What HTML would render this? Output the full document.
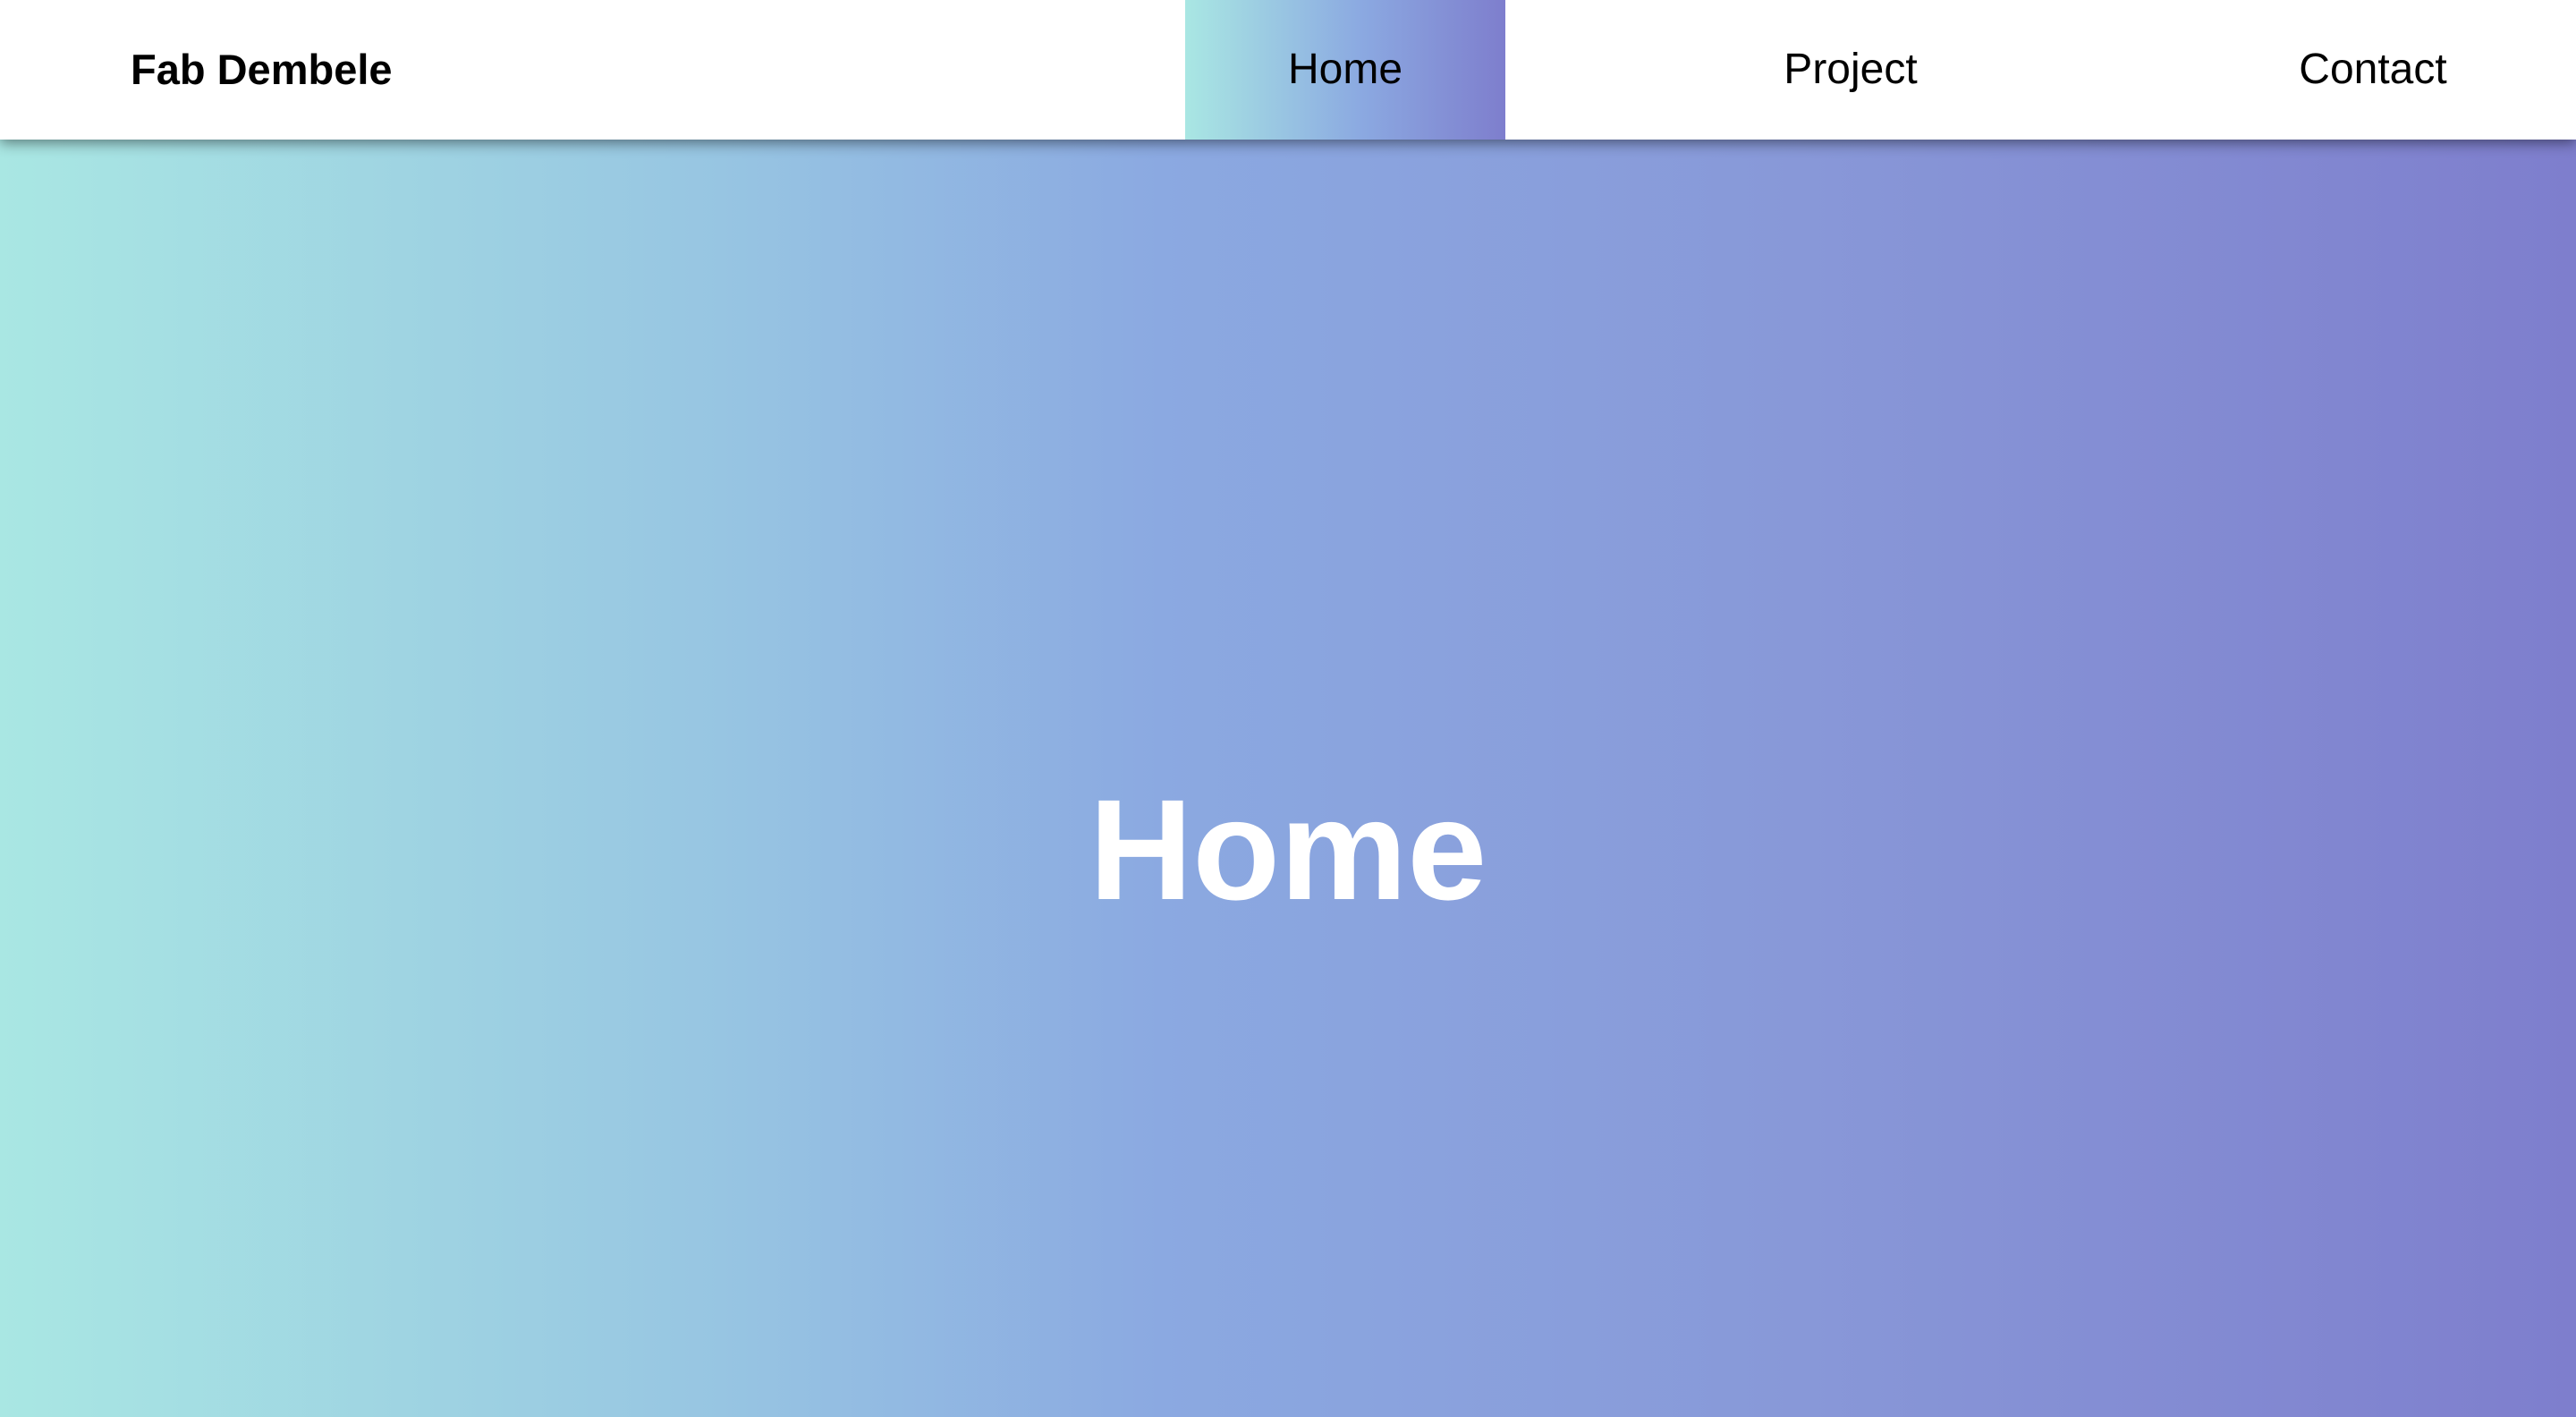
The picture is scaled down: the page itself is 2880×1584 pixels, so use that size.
<!DOCTYPE html>
<html><head><style>
html,body{margin:0;padding:0}
body{width:2880px;height:1584px;overflow:hidden;position:relative;font-family:"Liberation Sans",Arial,sans-serif;background:linear-gradient(to right,#a9e7e3 0%,#97c5e2 28%,#8ba9e1 45%,#8898d8 70%,#7e7ecd 100%)}
nav{position:absolute;left:0;top:0;width:2880px;height:156px;background:#fff;box-shadow:0 4px 14px rgba(0,0,0,.45)}
.logo{position:absolute;left:146px;top:0;line-height:156px;font-size:47px;font-weight:bold;color:#000}
.tab{position:absolute;top:0;height:156px;line-height:156px;font-size:48px;color:#000;text-align:center}
.active{left:1325px;width:358px;background:linear-gradient(to right,#a9e7e3,#8ba9e1 55%,#7e7ecd)}
h1{position:absolute;left:0;width:2880px;top:850px;margin:0;text-align:center;color:#fff;font-size:160px;font-weight:bold;line-height:200px}
</style></head><body>
<nav>
<div class="logo">Fab Dembele</div>
<div class="tab active">Home</div>
<div class="tab" style="left:1869px;width:400px">Project</div>
<div class="tab" style="left:2453px;width:400px">Contact</div>
</nav>
<h1>Home</h1>
</body></html>
